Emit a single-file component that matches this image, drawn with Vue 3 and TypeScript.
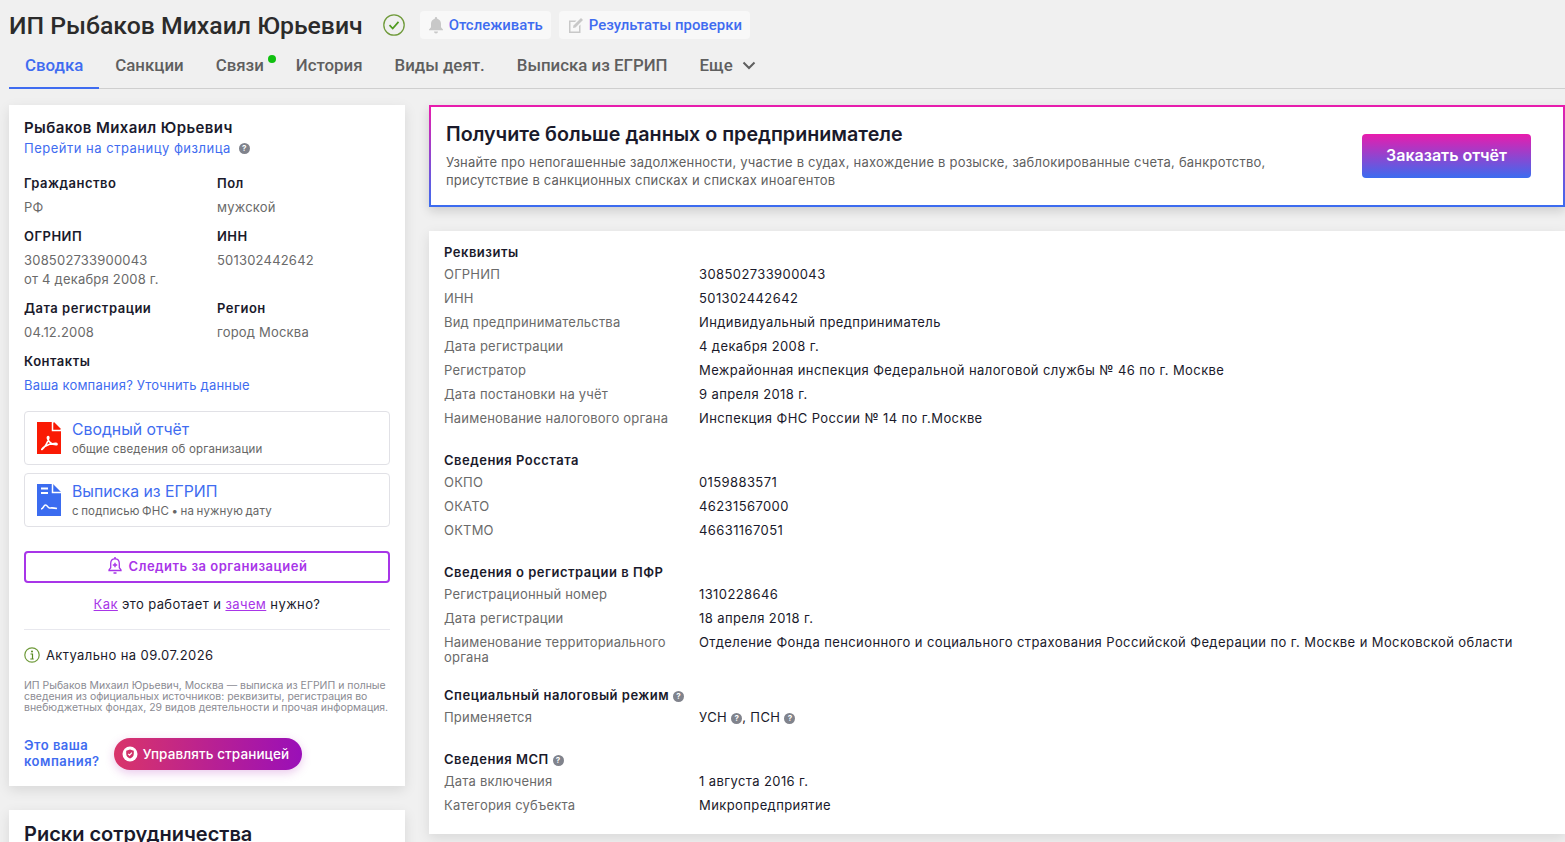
<script setup lang="ts">
interface Row {
  label: string
  value?: string
  tall?: boolean
}

const tabs = ['Санкции', 'Связи', 'История', 'Виды деят.', 'Выписка из ЕГРИП']

const requisites: Row[] = [
  { label: 'ОГРНИП', value: '308502733900043' },
  { label: 'ИНН', value: '501302442642' },
  { label: 'Вид предпринимательства', value: 'Индивидуальный предприниматель' },
  { label: 'Дата регистрации', value: '4 декабря 2008 г.' },
  { label: 'Регистратор', value: 'Межрайонная инспекция Федеральной налоговой службы № 46 по г. Москве' },
  { label: 'Дата постановки на учёт', value: '9 апреля 2018 г.' },
  { label: 'Наименование налогового органа', value: 'Инспекция ФНС России № 14 по г.Москве' },
]
const rosstat: Row[] = [
  { label: 'ОКПО', value: '0159883571' },
  { label: 'ОКАТО', value: '46231567000' },
  { label: 'ОКТМО', value: '46631167051' },
]
const pfr: Row[] = [
  { label: 'Регистрационный номер', value: '1310228646' },
  { label: 'Дата регистрации', value: '18 апреля 2018 г.' },
  {
    label: 'Наименование территориального органа',
    value: 'Отделение Фонда пенсионного и социального страхования Российской Федерации по г. Москве и Московской области',
    tall: true,
  },
]
const msp: Row[] = [
  { label: 'Дата включения', value: '1 августа 2016 г.' },
  { label: 'Категория субъекта', value: 'Микропредприятие' },
]
</script>

<template>
  <div class="page">
    <header class="head">
      <h1>ИП Рыбаков Михаил Юрьевич</h1>
      <svg class="status" width="24" height="24" viewBox="0 0 24 24" fill="none">
        <circle cx="12" cy="12" r="10.2" stroke="#6f9a3a" stroke-width="1.3" />
        <path d="M7.5 12.2l3.2 3.3 5.8-6.6" stroke="#4f9a1f" stroke-width="1.7" />
      </svg>
      <button class="chip">
        <svg width="16" height="18" viewBox="0 0 16 18"><path d="M8 1a1.2 1.2 0 0 1 1.2 1.2v.5C11.5 3.3 13 5.3 13 7.8v3.4l2 2.3v.8H1v-.8l2-2.3V7.8c0-2.5 1.5-4.5 3.8-5.1v-.5A1.2 1.2 0 0 1 8 1zM6 15.5h4a2 2 0 0 1-4 0z" fill="#c8c8c8" /></svg>
        Отслеживать
      </button>
      <button class="chip">
        <svg width="17" height="18" viewBox="0 0 17 18"><path d="M2 4.500h7.500L8 6H3.500v9.500H12V10l1.500-1.500V17H2z" fill="#c8c8c8" /><path d="M6.500 9.500L14 2l2 2-7.500 7.500-2.500.5z" fill="#c8c8c8" /></svg>
        Результаты проверки
      </button>
    </header>

    <nav class="tabs">
      <a class="tab active">Сводка</a>
      <a v-for="t in tabs" :key="t" class="tab" :class="{ dotted: t === 'Связи' }">{{ t }}</a>
      <a class="tab more">
        Еще
        <svg width="14" height="9" viewBox="0 0 14 9" fill="none"><path d="M1.500 1.500L7 7l5.500-5.500" stroke="#5f5f5f" stroke-width="2" /></svg>
      </a>
    </nav>

    <div class="columns">
      <aside class="side">
        <section class="card info">
          <div class="person">Рыбаков Михаил Юрьевич</div>
          <div class="person-link">
            <a>Перейти на страницу физлица</a>
            <span class="q">?</span>
          </div>

          <div class="facts">
            <div>
              <b>Гражданство</b>
              <p>РФ</p>
            </div>
            <div>
              <b>Пол</b>
              <p>мужской</p>
            </div>
            <div>
              <b>ОГРНИП</b>
              <p>308502733900043<br />от 4 декабря 2008 г.</p>
            </div>
            <div>
              <b>ИНН</b>
              <p>501302442642</p>
            </div>
            <div>
              <b>Дата регистрации</b>
              <p>04.12.2008</p>
            </div>
            <div>
              <b>Регион</b>
              <p>город Москва</p>
            </div>
          </div>

          <b class="contacts">Контакты</b>
          <a class="contacts-link">Ваша компания? Уточнить данные</a>

          <a class="doc first">
            <svg width="24" height="32" viewBox="0 0 24 32">
              <path d="M0 0h16l8 8v24H0z" fill="#fa1a04" />
              <path d="M17 0l7 7h-7z" fill="#fa1a04" />
              <path d="M15.500 0v8.500H24" fill="none" stroke="#fff" stroke-width="1.500" />
              <path d="M5 27.500c2.500-1.500 6-7.500 6.800-11.500.3-2-1.600-2-1.400 0 .6 3.500 4.300 6.800 8.600 6.800 1.700 0 1.300-1.600-.6-1.500-4.300.2-8.300 1.700-11.300 3.600-1.400 1-2.300 2.700-2.300 2.600z" fill="none" stroke="#fff" stroke-width="1.600" />
            </svg>
            <span>
              <em>Сводный отчёт</em>
              <small>общие сведения об организации</small>
            </span>
          </a>
          <a class="doc">
            <svg width="24" height="32" viewBox="0 0 24 32">
              <path d="M0 0h16l8 8v24H0z" fill="#3b6cf0" />
              <path d="M15.500 0v8.500H24" fill="none" stroke="#fff" stroke-width="1.500" />
              <path d="M4 3.500h7v2H4zM4 8h7v2H4z" fill="#fff" />
              <path d="M4 25c2.500 0 2.500-4 4.500-4s2.300 3 4 3 2.500-.5 7.500.5" fill="none" stroke="#fff" stroke-width="1.600" />
            </svg>
            <span>
              <em>Выписка из ЕГРИП</em>
              <small class="tight">с подписью ФНС • на нужную дату</small>
            </span>
          </a>

          <button class="watch">
            <svg width="16" height="18" viewBox="0 0 16 18" fill="none">
              <path d="M8 1.800c2.800 0 4.300 2 4.300 4.600v4.300l1.700 2.200v.6H2v-.6l1.700-2.200V6.400C3.700 3.800 5.200 1.800 8 1.800z" stroke="#a835e8" stroke-width="1.300" />
              <path d="M8 5.800v4.400M5.800 8h4.400M6.500 16h3M7 1h2" stroke="#a835e8" stroke-width="1.400" />
            </svg>
            Следить за организацией
          </button>
          <p class="how"><a>Как</a> это работает и <a>зачем</a> нужно?</p>

          <hr />

          <div class="fresh">
            <svg width="16" height="16" viewBox="0 0 16 16" fill="none">
              <circle cx="8" cy="8" r="7.200" stroke="#6f9a3a" stroke-width="1.200" />
              <path d="M6.500 7h2v5M6.300 12h3.400" stroke="#5a8a22" stroke-width="1.200" />
              <circle cx="8" cy="4.500" r="1" fill="#5a8a22" />
            </svg>
            Актуально на 09.07.2026
          </div>
          <p class="note">
            ИП Рыбаков Михаил Юрьевич, Москва — выписка из ЕГРИП и полные сведения из официальных источников: реквизиты, регистрация во внебюджетных фондах, 29 видов деятельности и прочая информация.
          </p>

          <div class="owner">
            <a>Это ваша<br />компания?</a>
            <button class="manage">
              <svg width="16" height="16" viewBox="0 0 16 16">
                <circle cx="8" cy="8" r="7.500" fill="#fff" />
                <path d="M8 3.500l3.800 1.300v3c0 2.400-1.600 4-3.800 4.700-2.200-.7-3.800-2.300-3.800-4.700v-3z" fill="#d13269" />
                <path d="M6.200 7.800l1.400 1.400 2.300-2.500" stroke="#fff" stroke-width="1.200" fill="none" />
              </svg>
              Управлять страницей
            </button>
          </div>
        </section>

        <section class="card risks">
          <h2>Риски сотрудничества</h2>
        </section>
      </aside>

      <main class="main">
        <section class="promo">
          <div class="promo-text">
            <h2>Получите больше данных о предпринимателе</h2>
            <p>
              Узнайте про непогашенные задолженности, участие в судах, нахождение в розыске, заблокированные счета, банкротство, присутствие в санкционных списках и списках иноагентов
            </p>
          </div>
          <button class="order">Заказать отчёт</button>
        </section>

        <section class="card details">
          <h3>Реквизиты</h3>
          <div v-for="r in requisites" :key="r.label" class="row">
            <span>{{ r.label }}</span><strong>{{ r.value }}</strong>
          </div>

          <h3>Сведения Росстата</h3>
          <div v-for="r in rosstat" :key="r.label" class="row">
            <span>{{ r.label }}</span><strong>{{ r.value }}</strong>
          </div>

          <h3>Сведения о регистрации в ПФР</h3>
          <div v-for="r in pfr" :key="r.label" class="row" :class="{ tall: r.tall }">
            <span>{{ r.label }}</span><strong>{{ r.value }}</strong>
          </div>

          <h3>Специальный налоговый режим <i class="q">?</i></h3>
          <div class="row">
            <span>Применяется</span>
            <strong>УСН <i class="q">?</i>, ПСН <i class="q">?</i></strong>
          </div>

          <h3>Сведения МСП <i class="q">?</i></h3>
          <div v-for="r in msp" :key="r.label" class="row">
            <span>{{ r.label }}</span><strong>{{ r.value }}</strong>
          </div>
        </section>
      </main>
    </div>
  </div>
</template>

<style>
html,
body {
  margin: 0;
  height: 842px;
  overflow: hidden;
  background: #f0f0f0;
}
</style>

<style scoped>
.page {
  font-family: Inter, 'Liberation Sans', sans-serif;
  font-size: 13px;
  letter-spacing: 0.2px;
  color: #1a1a2b;
  padding-left: 9px;
}

.head {
  display: flex;
  align-items: center;
  height: 50px;
}

.head h1 {
  margin: 0 19px 0 0;
  font-family: Roboto, sans-serif;
  font-size: 24.8px;
  font-weight: 500;
  letter-spacing: 0;
  color: #2b2b2b;
}

.status {
  margin-right: 14px;
}

.chip {
  display: flex;
  align-items: center;
  gap: 5px;
  height: 28px;
  margin-right: 8px;
  padding: 0 8px;
  border: 0;
  border-radius: 4px;
  background: #f8f8f8;
  font-family: Roboto, sans-serif;
  font-size: 14.9px;
  font-weight: 500;
  letter-spacing: 0;
  color: #3f6cf0;
}

.tabs {
  display: flex;
  height: 38px;
  border-bottom: 1px solid #cfcfcf;
}

.tab {
  position: relative;
  display: flex;
  align-items: center;
  gap: 9px;
  height: 30px;
  padding: 0 16px;
  font-family: Roboto, sans-serif;
  font-size: 16.85px;
  font-weight: 500;
  letter-spacing: 0;
  color: #5f5f5f;
}

.tab.active {
  height: 39px;
  box-sizing: border-box;
  padding: 0 16px 7px;
  color: #3f6cf0;
  border-bottom: 2px solid #3f6cf0;
}

.tab.dotted::after {
  content: '';
  position: absolute;
  top: 4.5px;
  right: 4px;
  width: 8px;
  height: 8px;
  border-radius: 50%;
  background: #10c010;
}

.columns {
  display: flex;
  gap: 24px;
  margin-top: 16px;
}

.side {
  display: flex;
  flex-direction: column;
  flex: 0 0 396px;
  gap: 24px;
}

.card {
  background: #fff;
  box-shadow: 0 4px 12px rgba(0, 0, 0, 0.1);
}

.info {
  padding: 14px 15px 16px;
  height: 681px;
  box-sizing: border-box;
}

.person {
  font-size: 15px;
  font-weight: 600;
  letter-spacing: 0.4px;
  line-height: 18px;
}

.person-link {
  display: flex;
  align-items: center;
  gap: 8px;
  margin-top: 2px;
  line-height: 18px;
  letter-spacing: 0.5px;
}

a {
  color: #3f6cf0;
}

.q {
  display: inline-flex;
  align-items: center;
  justify-content: center;
  width: 11px;
  height: 11px;
  border-radius: 50%;
  background: #80838c;
  color: #fff;
  font-size: 8px;
  font-style: normal;
  font-weight: 700;
  letter-spacing: 0;
  vertical-align: 1px;
}

.facts {
  display: grid;
  grid-template-columns: 193px 1fr;
  row-gap: 10px;
  margin-top: 17px;
}

.facts b,
.contacts {
  display: block;
  font-weight: 600;
  letter-spacing: 0.5px;
  line-height: 18px;
}

.facts p {
  margin: 6px 0 0;
  line-height: 19px;
  color: #6a6a6a;
}

.contacts {
  margin-top: 10px;
}

.contacts-link {
  display: block;
  margin-top: 6px;
  line-height: 18px;
}

.doc {
  display: flex;
  align-items: center;
  gap: 11px;
  height: 54px;
  box-sizing: border-box;
  margin-top: 8px;
  padding: 0 12px;
  border: 1px solid #e1e1e6;
  border-radius: 4px;
}

.doc.first {
  margin-top: 17px;
}

.doc em {
  display: block;
  font-size: 15.8px;
  font-style: normal;
  letter-spacing: 0;
  line-height: 19px;
}

.doc small {
  display: block;
  margin-top: 3px;
  font-size: 11.5px;
  letter-spacing: 0.17px;
  line-height: 15px;
  color: #666;
}

.doc small.tight {
  word-spacing: -1px;
}

.watch {
  display: flex;
  align-items: center;
  justify-content: center;
  gap: 6px;
  width: 100%;
  height: 32px;
  margin-top: 24px;
  padding: 0 0 2px;
  border: 2px solid #a835e8;
  border-radius: 4px;
  background: #fff;
  font-family: inherit;
  font-size: 13px;
  font-weight: 600;
  letter-spacing: 0.5px;
  color: #a835e8;
}

.how {
  margin: 12px 0 0;
  text-align: center;
  letter-spacing: 0.4px;
  line-height: 18px;
}

.how a {
  color: #a835e8;
  text-decoration: underline;
}

hr {
  margin: 16px 0 0;
  border: 0;
  border-top: 1px solid #e8e8ee;
}

.fresh {
  display: flex;
  align-items: center;
  gap: 6px;
  margin-top: 16px;
  letter-spacing: 0.4px;
  line-height: 18px;
}

.note {
  margin: 17px 0 0;
  font-size: 10.45px;
  letter-spacing: 0;
  line-height: 10.8px;
  color: #8b8b93;
}

.owner {
  display: flex;
  align-items: center;
  gap: 14px;
  margin-top: 25px;
}

.owner a {
  margin-top: -2px;
  font-weight: 600;
  letter-spacing: 0.5px;
  line-height: 16px;
}

.manage {
  display: flex;
  align-items: center;
  gap: 5px;
  width: 188px;
  height: 32px;
  padding: 0 8px;
  border: 0;
  border-radius: 16px;
  background: linear-gradient(90deg, #d9346a, #9a0fb8);
  box-shadow: 0 3px 10px rgba(170, 40, 180, 0.25);
  font-family: inherit;
  font-size: 13.5px;
  font-weight: 500;
  letter-spacing: 0.1px;
  color: #fff;
}

.risks {
  padding: 12px 15px;
  height: 100px;
  box-sizing: border-box;
}

.risks h2 {
  margin: 0;
  font-size: 20px;
  font-weight: 600;
  letter-spacing: 0;
}

.main {
  display: flex;
  flex-direction: column;
  flex: 1;
  gap: 24px;
}

.promo {
  display: flex;
  align-items: center;
  justify-content: space-between;
  height: 102px;
  box-sizing: border-box;
  padding: 0 32px 0 15px;
  border: 2px solid;
  border-image: linear-gradient(180deg, #e81cad, #3b6cf0) 1;
  background: #fff;
  box-shadow: 0 4px 10px rgba(0, 0, 0, 0.15);
}

.promo h2 {
  margin: 0;
  font-size: 19.7px;
  font-weight: 600;
  letter-spacing: 0;
  line-height: 24px;
}

.promo p {
  width: 850px;
  margin: 7px 0 0;
  letter-spacing: 0.22px;
  line-height: 18px;
  color: #5f5f5f;
}

.promo-text {
  margin-top: -2px;
}

.order {
  width: 169px;
  height: 44px;
  padding: 0 0 2px;
  border: 0;
  border-radius: 4px;
  background: linear-gradient(180deg, #e81cad, #3b6cf0);
  font-family: inherit;
  font-size: 16px;
  font-weight: 600;
  letter-spacing: 0;
  color: #fff;
}

.details {
  padding: 11px 15px 17px;
}

.details h3 {
  margin: 20px 0 0;
  font-size: 13px;
  font-weight: 600;
  letter-spacing: 0.5px;
  line-height: 20px;
}

.details h3:first-child {
  margin-top: 0;
}

.row {
  display: flex;
  padding: 4.5px 0;
  line-height: 15px;
}

.row.tall {
  padding-bottom: 0.5px;
}

.row span {
  flex: 0 0 240px;
  margin-right: 15px;
  color: #6a6a6a;
}

.row strong {
  font-weight: 400;
  letter-spacing: 0.4px;
  color: #1a1a2b;
}
</style>
